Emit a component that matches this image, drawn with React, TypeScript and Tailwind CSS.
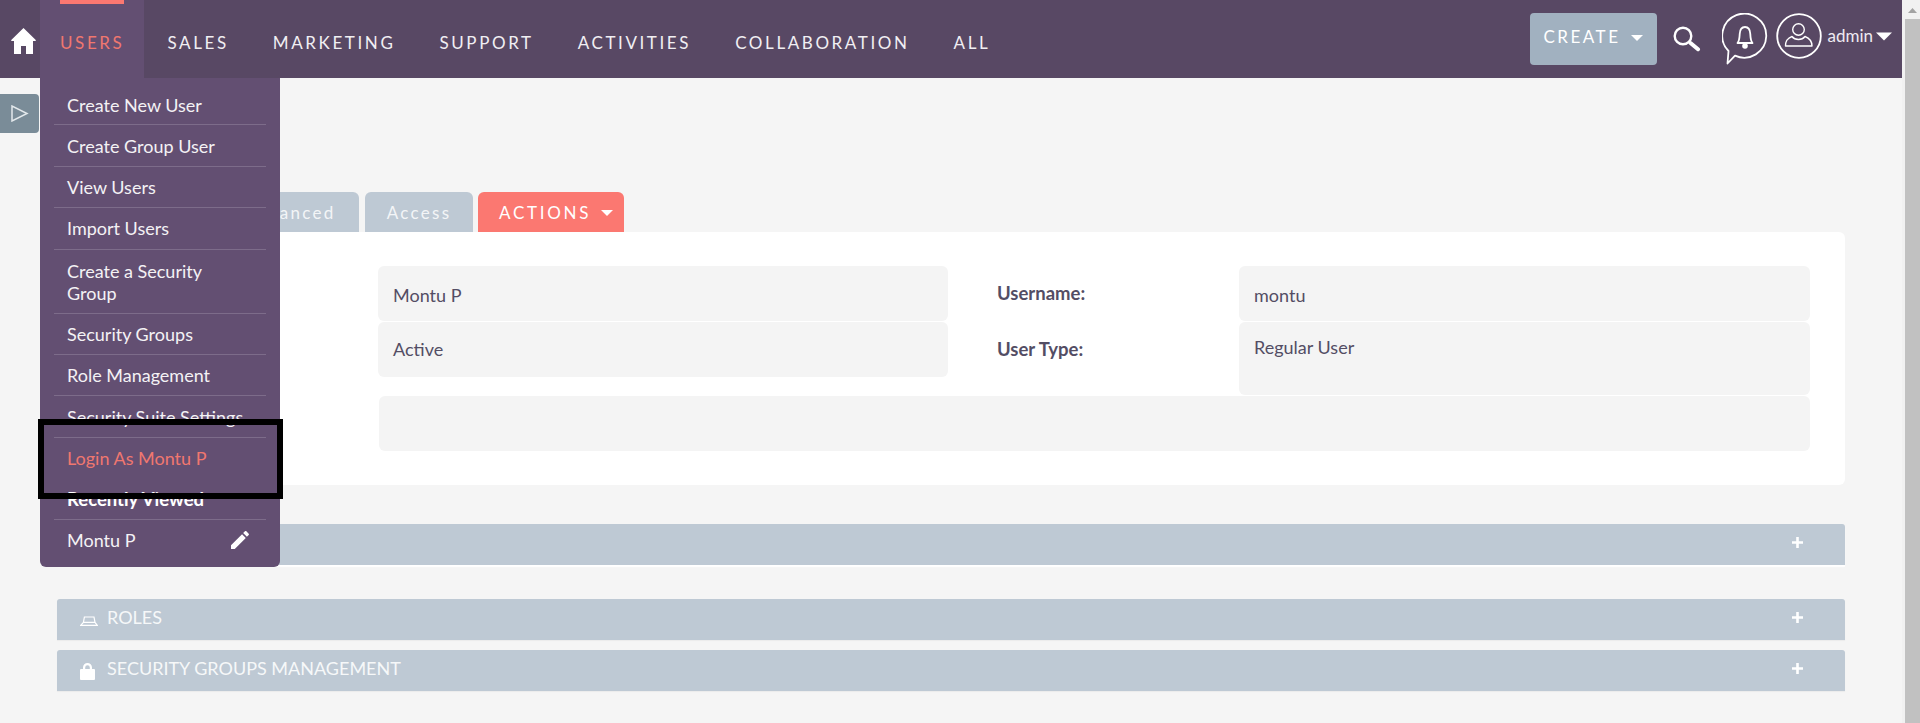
import React from 'react';

const navItems = ['SALES', 'MARKETING', 'SUPPORT', 'ACTIVITIES', 'COLLABORATION', 'ALL'];

const menuItems = [
    'Create New User',
    'Create Group User',
    'View Users',
    'Import Users',
    'Create a Security Group',
    'Security Groups',
    'Role Management',
    'Security Suite Settings',
];

function Caret({ className }: { className: string }) {
    return (
        <svg viewBox="0 0 12 6" className={className} fill="currentColor">
            <path d="M0 0h12L6 6z" />
        </svg>
    );
}

function HomeIcon() {
    return (
        <svg viewBox="0 0 25 26" className="w-[25px] h-[26px]" fill="#fff">
            <path fillRule="evenodd" d="M12.5 0 25 12.2l-.6.8H22v13h-7v-8h-5v8H3V13H.6L0 12.2z" />
        </svg>
    );
}

function SearchIcon() {
    return (
        <svg viewBox="0 0 28 26" className="w-[28px] h-[26px]" fill="none" stroke="#fff">
            <circle cx="10" cy="10" r="8.3" strokeWidth="2.4" />
            <path d="M17.5 17 25 23.2" strokeWidth="4" strokeLinecap="round" />
        </svg>
    );
}

function BellBubble() {
    return (
        <svg viewBox="0 0 46 52" className="w-[46px] h-[52px]" fill="none" stroke="#fff">
            <path d="M6.5 38A22 22 0 1 1 13 42.6L5.5 50.5z" strokeWidth="1.8" strokeLinejoin="round" />
            <path d="M15.5 30c2-2.5 2-5 2.2-9 .2-4 2-7 5.3-7s5.100 3 5.300 7c.2 4 .2 6.500 2.200 9z" strokeWidth="1.800" strokeLinejoin="round" />
            <circle cx="23" cy="33" r="2.800" fill="#fff" stroke="none" />
        </svg>
    );
}

function UserCircle() {
    return (
        <svg viewBox="0 0 46 46" className="w-[46px] h-[46px]" fill="none" stroke="#fff">
            <circle cx="23" cy="23" r="21.800" strokeWidth="1.800" />
            <circle cx="22.500" cy="16.500" r="5.800" strokeWidth="1.400" />
            <path d="M9.500 33h26.500c0-5-2-7.500-7-9.500-1.500 2-3.800 3-6.500 3s-5-1-6.500-3c-5 2-6.500 4.500-6.500 9.500z" strokeWidth="1.400" strokeLinejoin="round" />
        </svg>
    );
}

function Plus() {
    return (
        <svg viewBox="0 0 11 11" className="w-[11px] h-[11px]" fill="#fff">
            <path d="M4.200 0h2.600v4.200H11v2.600H6.800V11H4.200V6.800H0V4.200h4.200z" />
        </svg>
    );
}

function Panel({ title, icon, className }: { title: string; icon?: React.ReactNode; className: string }) {
    return (
        <div className={`h-[41px] bg-[#bec9d4] rounded-t-[3px] flex items-center pl-[23px] pr-[42px] text-[18px] text-[#f6f8f9] ${className}`}>
            <span className="w-[27px] flex justify-start">{icon}</span>
            <span className="flex-1 -mt-[5px]">{title}</span>
            <span className="-mt-[5px]"><Plus /></span>
        </div>
    );
}

function Field({ className, children }: { className: string; children?: React.ReactNode }) {
    return <div className={`bg-[#f4f4f4] rounded-md pl-[15px] flex items-center ${className}`}>{children}</div>;
}

export default function App() {
    return (
        <div className="flex w-full h-[723px] overflow-hidden bg-[#f5f5f5] font-[Lato,sans-serif]">
            <div className="relative flex-1 min-w-0 flex flex-col">
                <header className="h-[78px] bg-[#584864] flex items-stretch text-white shrink-0">
                    <div className="w-[40px] flex items-center pl-[11px] pt-[4px]"><HomeIcon /></div>
                    <nav className="flex gap-[4px] text-[17px] tracking-[2.600px]">
                        <div className="relative w-[104px] -mr-[0.5px] bg-[#634f72] pl-5 flex items-center pt-[7px] text-[#f0776f]">
                            USERS
                            <span className="absolute top-0 left-[20px] w-[64px] h-[4px] bg-[#fb7871]" />
                        </div>
                        {navItems.map((item) => (
                            <div key={item} className="px-5 flex items-center pt-[7px] text-[#f1eff3]">{item}</div>
                        ))}
                    </nav>
                    <div className="ml-auto flex items-center pr-[10px]">
                        <button className="w-[127px] h-[52px] bg-[#a1b1c0] rounded-[4px] flex items-center pl-[13px] text-[17px] tracking-[2.500px]">
                            <span className="-mt-[4px]">CREATE</span>
                            <Caret className="w-[12px] h-[6px] ml-[11px] -mt-[3px]" />
                        </button>
                        <div className="ml-[16px]"><SearchIcon /></div>
                        <div className="ml-[21px]"><BellBubble /></div>
                        <div className="ml-[8px] -mt-[6px]"><UserCircle /></div>
                        <span className="ml-[5px] text-[17px] text-[#eeeaf1] -mt-[6px]">admin</span>
                        <Caret className="w-[16px] h-[9px] ml-[3px] -mt-[6px]" />
                    </div>
                </header>

                <main className="flex-1 px-[57px] pt-[114px]">
                    <div className="flex gap-[6px] h-[40px] text-[17px] tracking-[2.300px] text-[#f3f5f7]">
                        <div className="w-[157px] bg-[#bec9d4] rounded-t-md" />
                        <div className="w-[139px] pt-[2px] bg-[#bec9d4] rounded-t-md flex items-center justify-center">Advanced</div>
                        <div className="w-[108px] pt-[2px] bg-[#bec9d4] rounded-t-md flex items-center justify-center">Access</div>
                        <div className="w-[146px] -ml-[1px] pt-[2px] bg-[#fb7871] rounded-t-md flex items-center pl-[21px] tracking-[2.700px] text-white">
                            ACTIONS
                            <Caret className="w-[12px] h-[6px] ml-[10px]" />
                        </div>
                    </div>

                    <section className="bg-white rounded-md pt-[34px] pb-[34px] pl-[321px] pr-[35px] text-[18px] text-[#534d64]">
                        <div className="flex">
                            <Field className="w-[570px] h-[55px] pt-[4px]">Montu P</Field>
                            <div className="w-[291px] pl-[49px] pt-[1px] flex items-center font-bold text-[18.500px]">Username:</div>
                            <Field className="flex-1 h-[55px] pt-[4px]">montu</Field>
                        </div>
                        <div className="flex mt-[1px]">
                            <Field className="w-[570px] h-[55px]">Active</Field>
                            <div className="w-[291px] pl-[49px] pt-[1px] h-[55px] flex items-center font-bold text-[18.500px]">User Type:</div>
                            <Field className="flex-1 h-[73px] items-start pt-[12px]">Regular User</Field>
                        </div>
                        <Field className="ml-[1px] mt-[1px] h-[55px]" />
                    </section>

                    <Panel className="mt-[39px] shadow-[0_2px_1px_#ffffff]" title="SECURITY DOMAIN" />
                    <Panel
                        className="mt-[34px] shadow-[0_1px_1px_#ebebeb]"
                        title="ROLES"
                        icon={
                            <svg viewBox="0 0 18 10" className="w-[18px] h-[10px] mt-[2px]" fill="none" stroke="#fff" strokeWidth="1.200">
                                <path d="M.6 9.400h16.800l-2.400-3-1-5.400H4.400l-1 5.400zM3.400 6.400h11.600" />
                            </svg>
                        }
                    />
                    <Panel
                        className="mt-[10px] shadow-[0_1px_1px_#ebebeb]"
                        title="SECURITY GROUPS MANAGEMENT"
                        icon={
                            <svg viewBox="0 0 15 18" className="w-[15px] h-[18px] mt-[1px]" fill="#fff">
                                <path fillRule="evenodd" d="M3 7V5.500a4.500 4.500 0 0 1 9 0V7h2a1 1 0 0 1 1 1v9a1 1 0 0 1-1 1H1a1 1 0 0 1-1-1V8a1 1 0 0 1 1-1zm2.200 0h4.600V5.500a2.300 2.300 0 0 0-4.600 0z" />
                            </svg>
                        }
                    />
                </main>

                <div className="absolute left-0 top-[94px] w-[39px] h-[39px] bg-[#7a8c98] rounded-r-[4px] flex items-center justify-center">
                    <svg viewBox="0 0 18 17" className="w-[18px] h-[17px]" fill="none" stroke="#e3e8eb" strokeWidth="1.500">
                        <path d="M1 1v15l15-7.500z" />
                    </svg>
                </div>

                <div className="absolute left-[40px] top-[78px] w-[240px] h-[489px] bg-[#634f72] rounded-b-md pt-[6px] text-[18px] leading-[22px] text-[#f4f2f5]">
                    {menuItems.map((item) => (
                        <div
                            key={item}
                            className={`mx-[14px] pl-[13px] pr-[10px] border-b border-[#7d6c8a] flex items-center ${item === 'Create a Security Group' ? 'h-[64px] pr-[24px] pt-[1px]' : 'h-[41.400px]'} ${item === 'Security Groups' || item === 'Create New User' || item === 'Create Group User' ? 'pt-[1px]' : ''}`}
                        >
                            {item}
                        </div>
                    ))}
                    <div className="mx-[14px] pl-[13px] h-[41.500px] flex items-center text-[#f0776f]">Login As Montu P</div>
                    <div className="mx-[14px] pl-[13px] pt-[1px] h-[40.500px] border-b border-[#7d6c8a] flex items-center font-bold text-[18.500px] text-white">Recently Viewed</div>
                    <div className="mx-[14px] pl-[13px] pr-[14px] h-[41px] flex items-center justify-between">
                        Montu P
                        <svg viewBox="0 0 24 24" className="w-[24px] h-[24px]" fill="#fff">
                            <path d="M3 17.250V21h3.750L17.810 9.940l-3.750-3.750L3 17.250zM20.710 7.040c.39-.39.39-1.020 0-1.410l-2.340-2.340c-.39-.39-1.020-.39-1.410 0l-1.830 1.830 3.750 3.750 1.830-1.830z" />
                        </svg>
                    </div>
                </div>

                <div className="absolute left-[38px] top-[419px] w-[245px] h-[80px] border-[6px] border-black" />
            </div>

            <div className="w-[18px] shrink-0 bg-[#f1f1f1] flex flex-col items-center pl-[2px]">
                <svg viewBox="0 0 9 5" className="w-[9px] h-[5px] mt-[8px]" fill="#a3a3a3">
                    <path d="M4.500 0 9 5H0z" />
                </svg>
                <div className="w-[15px] flex-1 mt-[6px] bg-[#c1c1c1]" />
            </div>
        </div>
    );
}
